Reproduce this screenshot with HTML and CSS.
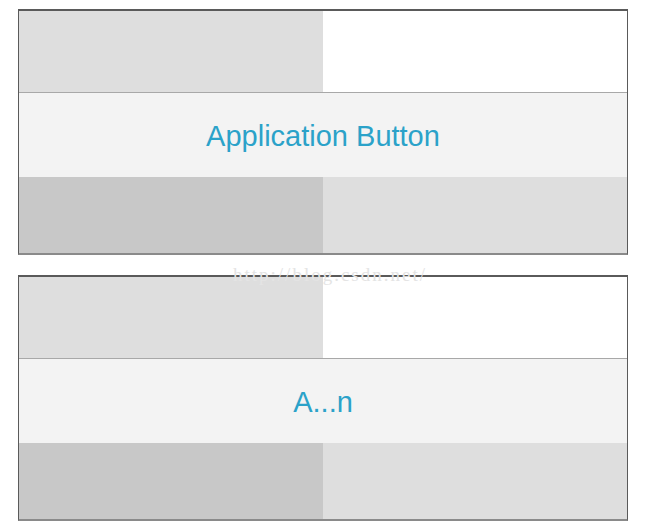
FILE: index.html
```html
<!DOCTYPE html>
<html lang="en">
<head>
    <meta charset="UTF-8">
    <title>Application Button</title>
    <link rel="stylesheet" href="styles.css">
</head>
<body>
<div class="page">
    <div class="panel">
        <div class="row top">
            <div class="cell light"></div>
            <div class="cell white"></div>
        </div>
        <div class="button">Application Button</div>
        <div class="row bottom">
            <div class="cell dark"></div>
            <div class="cell light"></div>
        </div>
    </div>

    <div class="panel">
        <div class="row top">
            <div class="cell light"></div>
            <div class="cell white"></div>
        </div>
        <div class="button">A...n</div>
        <div class="row bottom">
            <div class="cell dark"></div>
            <div class="cell light"></div>
        </div>
    </div>

    <div class="watermark">http://blog.csdn.net/</div>
</div>
</body>
</html>
```

FILE: styles.css
```css
body { margin: 0; background: #fff; font-family: "Liberation Sans", Arial, sans-serif; }
.page { position: relative; width: 610px; margin-left: 18px; padding-top: 9px; display: flex; flex-direction: column; gap: 20px; }
.panel { border: 2px solid #5a5a5a; border-left-width: 1px; border-right-width: 1px; border-bottom-color: #8a8a8a; }
.row { display: flex; }
.row.top { height: 81px; border-bottom: 1px solid #a8a8a8; }
.row.bottom { height: 76px; }
.cell { flex: 1; }
.cell:first-child { flex: 0 0 304px; }
.light { background: #dedede; }
.white { background: #fff; }
.dark { background: #c8c8c8; }
.button { height: 84px; padding-top: 2px; box-sizing: border-box; background: #f3f3f3; color: #2ba2c9; font-size: 29px; display: flex; align-items: center; justify-content: center; }
.watermark { position: absolute; left: 215px; top: 264px; font-family: "Liberation Serif", serif; font-size: 19px; letter-spacing: 2px; color: #e4e4e4; }
```
